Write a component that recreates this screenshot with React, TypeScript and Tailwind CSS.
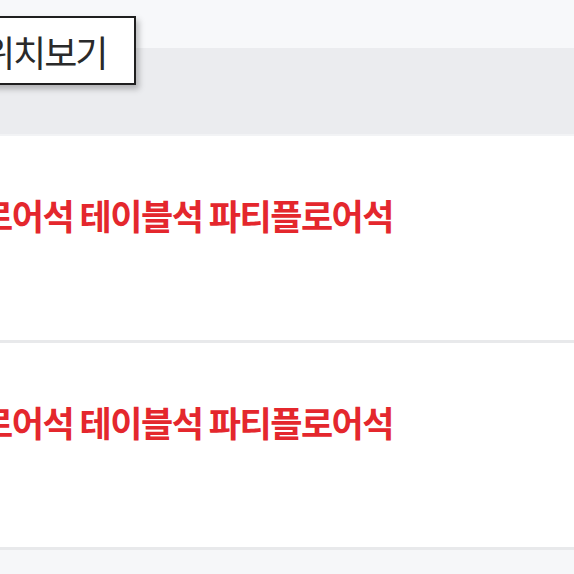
import React from "react";

const rows = [
  { id: 1, title: "로어석 테이블석 파티플로어석" },
  { id: 2, title: "로어석 테이블석 파티플로어석" },
];

export default function App() {
  return (
    <div
      className="relative w-[574px] h-[574px] overflow-hidden bg-[#f6f7f9]"
      style={{ fontFamily: '"Noto Sans CJK KR", "Noto Sans", sans-serif' }}
    >
      {/* 상단 영역 */}
      <div className="h-[48px] bg-[#f7f8fa]" />
      <div className="h-[88px] bg-[#ebecef] border-b-2 border-[#f2f3f5]" />

      {/* 좌석 목록 */}
      {rows.map((row) => (
        <div
          key={row.id}
          className="h-[207px] bg-white border-b-[3px] border-[#e8e9eb] pt-[59px] overflow-hidden"
        >
          <p className="-ml-[19px] whitespace-nowrap text-[35px] leading-[40px] font-bold tracking-[-1.5px] text-[#e4272d]">
            {row.title}
          </p>
        </div>
      ))}

      {/* 위치보기 툴팁 */}
      <div className="absolute left-[-50px] top-[16px] h-[69px] flex items-center border-2 border-[#1f1f1f] bg-white pl-[30px] pr-[28px] shadow-[3px_4px_6px_rgba(0,0,0,0.25)]">
        <span className="text-[36px] leading-none tracking-[-2px] text-[#2a2a2a]">위치보기</span>
      </div>
    </div>
  );
}
